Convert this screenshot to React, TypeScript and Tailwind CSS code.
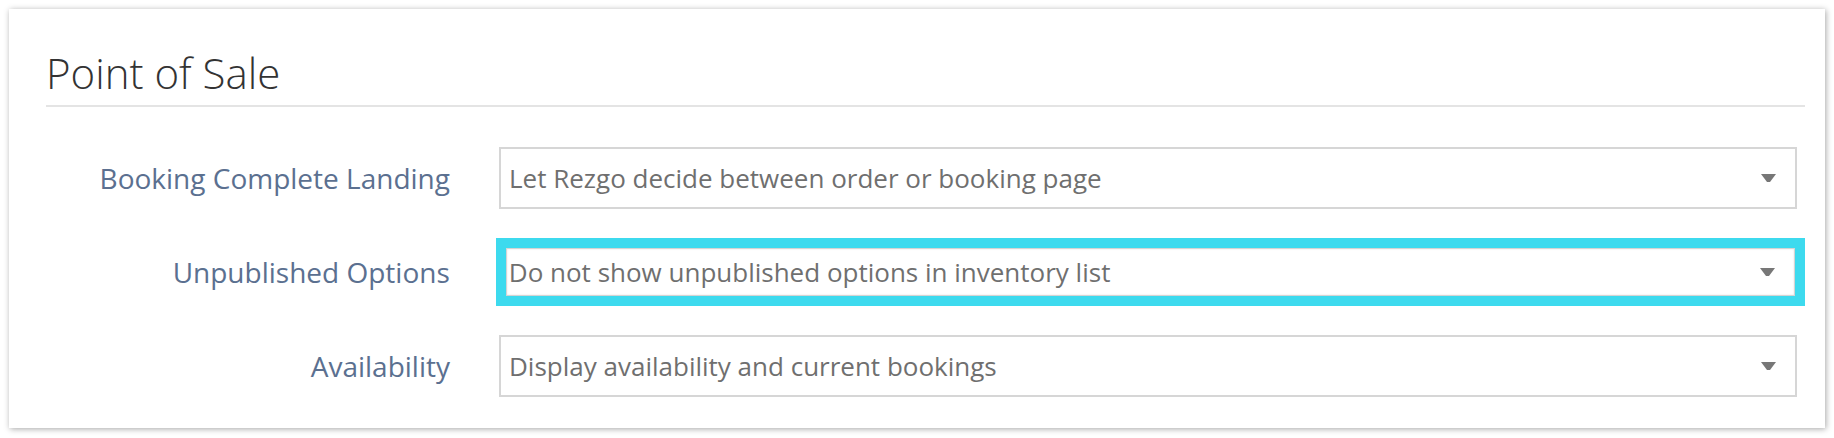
const rows = [
  { label: "Booking Complete Landing", value: "Let Rezgo decide between order or booking page" },
  { label: "Unpublished Options", value: "Do not show unpublished options in inventory list", highlight: true },
  { label: "Availability", value: "Display availability and current bookings" },
];

function Caret() {
  return (
    <svg width="15" height="8" viewBox="0 0 15 8" className="shrink-0">
      <path d="M0 0h15l-6 8h-3z" fill="#777777" />
    </svg>
  );
}

function SelectBox({ value, highlight }: { value: string; highlight?: boolean }) {
  if (highlight) {
    return (
      <div className="ml-[46px] h-[68px] w-[1310px] border-[10px] border-[#3ddaee]">
        <div className="flex h-full items-center justify-between border border-[#d4d4d4] pl-[2px] pr-[19px] shadow-[inset_0_0_2px_rgba(0,0,0,0.12)]">
          <span className="text-[26px] text-[#6f6f6f]">{value}</span>
          <Caret />
        </div>
      </div>
    );
  }
  return (
    <div className="ml-[49px] flex h-[62px] w-[1298px] items-center justify-between border-2 border-[#d6d6d6] pl-[8px] pr-[19px]">
      <span className="text-[26px] text-[#6f6f6f]">{value}</span>
      <Caret />
    </div>
  );
}

export default function App() {
  return (
    <div className="h-[438px] w-[1834px] bg-white p-[9px] font-['Open_Sans',sans-serif]">
      <div className="h-[419px] w-[1816px] bg-white pl-[37px] pr-[20px] pt-[41px] shadow-[1px_1px_6px_rgba(0,0,0,0.35)]">
        <h2 className="border-b-2 border-[#e4e4e4] pb-[9px] text-[42px] font-light leading-[46px] text-[#333333]">
          Point of Sale
        </h2>
        <div className="mt-[40px] flex flex-col gap-[29px]">
          {rows.map((r) => (
            <div key={r.label} className="flex items-center">
              <p className="w-[404px] text-right text-[28px] text-[#5b7090]">{r.label}</p>
              <SelectBox value={r.value} highlight={r.highlight} />
            </div>
          ))}
        </div>
      </div>
    </div>
  );
}
